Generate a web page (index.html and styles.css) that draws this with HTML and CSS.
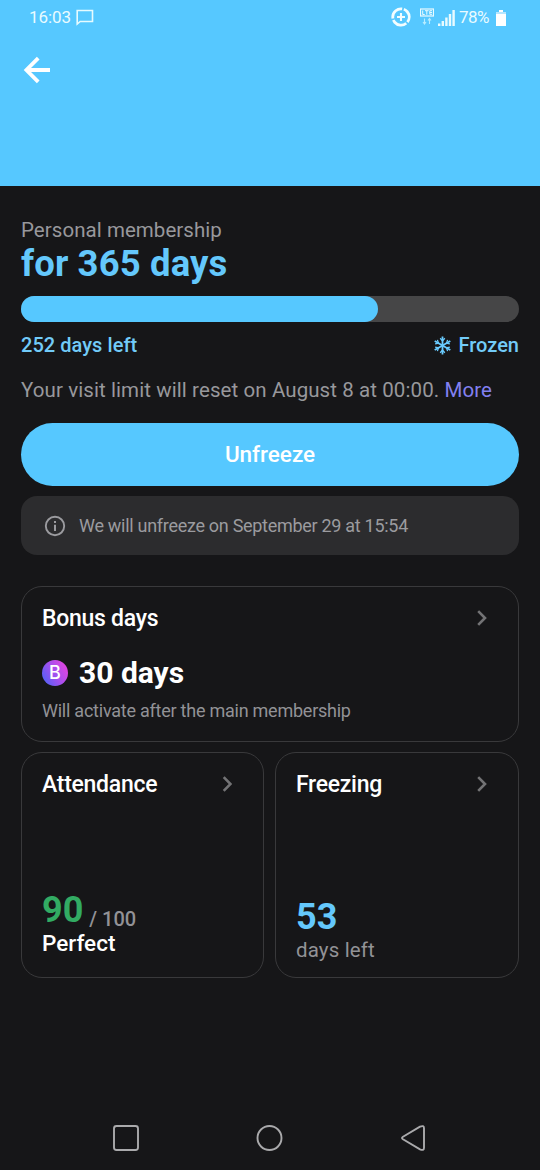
FILE: index.html
```html
<!DOCTYPE html>
<html lang="en">
<head>
<meta charset="utf-8">
<title>Personal membership</title>
<link rel="stylesheet" href="styles.css">
</head>
<body>
<div class="screen">
  <header class="hero">
    <div class="status">
      <span class="clock">16:03</span>
      <svg class="chat" width="18" height="17" viewBox="0 0 18 17"><path d="M1.2 15V1.5H16.5V12.5H4.2z" fill="none" stroke="#e6fbff" stroke-width="1.6"/></svg>
      <svg class="saver" width="20" height="20" viewBox="0 0 20 20" fill="none" stroke="#f2fdff"><circle cx="10" cy="10" r="8.2" stroke-width="2.8" pathLength="90" stroke-dasharray="27 3" transform="rotate(50 10 10)"/><path d="M10 6v8M6 10h8" stroke-width="2.1"/></svg>
      <svg class="lte" width="14" height="18" viewBox="0 0 14 18"><rect x=".5" y="1" width="13" height="7" fill="none" stroke="#e9fbff" stroke-width="1.2"/><path d="M2.7 2.5v4h2M5 2.7h3.6M6.8 2.7v4M12 2.7H9.8v3.6H12M9.8 4.5H12" fill="none" stroke="#e9fbff" stroke-width="1"/><path d="M4.5 10.5v5M3 14l1.5 2L6 14M9.5 16v-5M8 12.5l1.5-2 1.5 2" fill="none" stroke="#b8ecff" stroke-width="1.1"/></svg>
      <svg class="signal" width="17" height="17" viewBox="0 0 17 17" fill="#e9fbff"><path d="M0 14.5h2.4V17H0zM3.6 12H6v5H3.6zM7.2 8.5h2.4V17H7.2zM10.8 5h2.4v12h-2.4zM14.4 1h2.4v16h-2.4z"/></svg>
      <span class="percent">78%</span>
      <svg class="battery" width="10" height="17" viewBox="0 0 10 17"><path d="M3 1h4v2h3v14H0V3h3z" fill="#fff"/><path d="M0 3h10v2H0z" fill="#b5e6ff"/></svg>
    </div>
    <svg class="back" width="28" height="28" viewBox="0 0 28 28" fill="none" stroke="#fff" stroke-width="3.8"><path d="M27 14H4M15.2 2.2 3.4 14l11.8 11.8"/></svg>
  </header>

  <main class="content">
    <div class="kind">Personal membership</div>
    <h1 class="term">for 365 days</h1>
    <div class="track"><div class="fill"></div></div>
    <div class="summary">
      <span class="left">252 days left</span>
      <span class="frozen">
        <svg width="17" height="19" viewBox="-8.5 -9.5 17 19" fill="none" stroke="#6accff" stroke-width="1.8"><g id="arm"><path d="M0-9V9"/><path d="M-2.3-7.2 0-4.6 2.3-7.2M-2.3 7.2 0 4.6 2.3 7.2" stroke-width="1.3"/></g><use href="#arm" transform="rotate(60)"/><use href="#arm" transform="rotate(120)"/></svg>
        <span class="frozen-label">Frozen</span>
      </span>
    </div>
    <p class="limit">Your visit limit will reset on August 8 at 00:00. <a class="more">More</a></p>
    <button class="unfreeze">Unfreeze</button>
    <div class="notice">
      <svg width="22" height="22" viewBox="0 0 22 22"><circle cx="11" cy="11" r="9.2" fill="none" stroke="#9b9b9f" stroke-width="1.9"/><path d="M10 9.8h2V16h-2zM10 6h2v2h-2z" fill="#9b9b9f"/></svg>
      <span class="notice-text">We will unfreeze on September 29 at 15:54</span>
    </div>

    <section class="card bonus">
      <div class="card-head"><h2 class="title">Bonus days</h2><svg class="chevron" width="11" height="18" viewBox="0 0 11 18"><path d="M2.2 2.2 9 9l-6.8 6.8"/></svg></div>
      <div class="bonus-row">
        <span class="coin"><span class="coin-letter">B</span></span>
        <span class="bonus-days">30 days</span>
      </div>
      <div class="bonus-note">Will activate after the main membership</div>
    </section>

    <div class="pair">
      <section class="card tile">
        <div class="card-head"><h2 class="title">Attendance</h2><svg class="chevron" width="11" height="18" viewBox="0 0 11 18"><path d="M2.7 2.2 9.5 9l-6.8 6.8"/></svg></div>
        <div class="score"><span class="big green">90</span><span class="total">/ 100</span></div>
        <div class="rating">Perfect</div>
      </section>
      <section class="card tile">
        <div class="card-head"><h2 class="title">Freezing</h2><svg class="chevron" width="11" height="18" viewBox="0 0 11 18"><path d="M2.2 2.2 9 9l-6.8 6.8"/></svg></div>
        <div class="freeze-count big blue">53</div>
        <div class="freeze-note">days left</div>
      </section>
    </div>
  </main>

  <nav class="navbar">
    <svg width="28" height="28" viewBox="0 0 28 28"><rect x="2" y="2" width="24" height="24" rx="2.5"/></svg>
    <svg width="28" height="28" viewBox="0 0 28 28"><circle cx="13.5" cy="14" r="12"/></svg>
    <svg width="28" height="28" viewBox="0 0 28 28"><path d="M4 12.7 21 2.7q4-1.8 4 1.6v19.4q0 3.4-4 1.6L4 15.3q-2-1.3 0-2.6z"/></svg>
  </nav>
</div>
</body>
</html>
```
FILE: styles.css
```css
* { box-sizing: border-box; }
body {
  margin: 0;
  background: #161618;
  color: #fff;
  font-family: Roboto, "Liberation Sans", sans-serif;
}
svg { display: block; flex: none; }
h1, h2, p { margin: 0; }
.screen {
  width: 540px;
  height: 1170px;
  display: flex;
  flex-direction: column;
  overflow: hidden;
  white-space: nowrap;
}
.hero { height: 186px; flex: none; background: #56c8ff; }
.status {
  height: 34px;
  display: flex;
  align-items: center;
  padding: 0 34px 0 29px;
  font-size: 17px;
  color: #e9fbff;
}
.clock { letter-spacing: -0.1px; }
.chat { margin-left: 5px; }
.saver { margin-left: auto; }
.lte { margin-left: 9px; }
.signal { margin-left: 4px; }
.percent { margin-left: 4px; letter-spacing: -0.5px; }
.battery { margin-left: 7px; }
.back { margin: 22px 0 0 23px; }

.content { flex: 1; padding: 30px 21px 0; }
.kind { font-size: 20.5px; line-height: 28px; color: #98989c; letter-spacing: 0.05px; }
.term { font-size: 36.5px; line-height: 40px; font-weight: 700; color: #64c8fc; letter-spacing: 0.12px; }
.track { height: 26px; margin-top: 12px; border-radius: 13px; background: #464647; }
.fill { width: 357px; height: 26px; border-radius: 13px; background: #56c8ff; }
.summary {
  display: flex;
  justify-content: space-between;
  margin-top: 9px;
  height: 28px;
  align-items: center;
  font-size: 20px;
  font-weight: 500;
  color: #72cbf8;
}
.left { letter-spacing: 0.05px; }
.frozen { display: flex; align-items: center; gap: 7px; }
.limit { margin-top: 17px; font-size: 20.5px; line-height: 28px; color: #98989c; letter-spacing: 0.09px; }
.more { color: #8280f0; }
.unfreeze {
  display: block;
  width: 100%;
  height: 63px;
  margin-top: 19px;
  padding: 0 0 2px;
  border: 0;
  border-radius: 32px;
  background: #56c8ff;
  color: #fff;
  font: 500 22.5px Roboto, sans-serif;
}
.notice {
  display: flex;
  align-items: center;
  gap: 13px;
  height: 59px;
  margin-top: 10px;
  padding-left: 23px;
  border-radius: 16px;
  background: #2c2c2e;
  color: #9b9b9f;
  font-size: 18px;
  letter-spacing: -0.29px;
}
.card { border: 1px solid #39393b; border-radius: 21px; padding: 17px 20px 0; }
.bonus { height: 156px; margin-top: 31px; }
.card-head { display: flex; align-items: center; justify-content: space-between; height: 28px; padding-right: 11px; }
.title { font-size: 23px; line-height: 28px; font-weight: 500; letter-spacing: -0.28px; padding-top: 1px; }
.chevron { fill: none; stroke: #737375; stroke-width: 2.6; }
.bonus-row { display: flex; align-items: center; height: 36px; margin-top: 22px; }
.coin {
  width: 26px;
  height: 26px;
  margin-top: 1px;
  border-radius: 50%;
  display: flex;
  align-items: center;
  justify-content: center;
  background: linear-gradient(60deg, #5560f5 10%, #a54fee 50%, #e444df 90%);
  font: 500 18px/26px Inter, "Liberation Sans", sans-serif;
}
.bonus-days { margin-left: 11px; font-size: 30px; font-weight: 700; }
.bonus-note { margin-top: 9px; font-size: 18px; line-height: 24px; color: #929296; letter-spacing: -0.24px; }
.pair { display: grid; grid-template-columns: 243px 244px; gap: 11px; margin-top: 10px; }
.tile { height: 226px; }
.big { font-size: 36px; line-height: 40px; font-weight: 700; }
.green { color: #32ab63; }
.blue { color: #64c8fc; }
.score { display: flex; height: 40px; margin-top: 92px; }
.total { margin: 9px 0 0 6px; font-size: 20px; line-height: 40px; font-weight: 500; color: #929296; }
.rating { margin-top: -1px; font-size: 22.5px; line-height: 28px; font-weight: 500; }
.freeze-count { margin-top: 99px; }
.freeze-note { margin-top: -1px; font-size: 20.5px; line-height: 28px; letter-spacing: 0.15px; color: #929296; }

.navbar { height: 64px; flex: none; display: flex; justify-content: space-between; align-items: center; padding: 0 113px 0 112px; }
.navbar svg { fill: none; stroke: #aaaaac; stroke-width: 1.9; }
```
